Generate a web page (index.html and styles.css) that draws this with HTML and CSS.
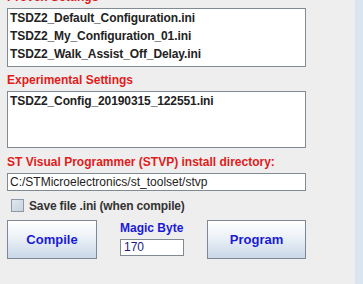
FILE: index.html
```html
<!DOCTYPE html>
<html>
<head>
<meta charset="utf-8">
<link rel="stylesheet" href="styles.css">
</head>
<body>
<div class="window">
  <div class="panel">
    <div class="label red">Proven Settings</div>
    <div class="list list1">
      <div class="row">TSDZ2_Default_Configuration.ini</div>
      <div class="row">TSDZ2_My_Configuration_01.ini</div>
      <div class="row">TSDZ2_Walk_Assist_Off_Delay.ini</div>
    </div>
    <div class="label red gap">Experimental Settings</div>
    <div class="list list2">
      <div class="row">TSDZ2_Config_20190315_122551.ini</div>
    </div>
    <div class="label red gap gap-lg">ST Visual Programmer (STVP) install directory:</div>
    <div class="field path">C:/STMicroelectronics/st_toolset/stvp</div>
    <label class="check">
      <span class="box"></span>
      <span class="check-text">Save file .ini (when compile)</span>
    </label>
    <div class="actions">
      <div class="btn">Compile</div>
      <div class="magic">
        <div class="label blue">Magic Byte</div>
        <div class="field small">170</div>
      </div>
      <div class="btn btn-wide">Program</div>
    </div>
  </div>
  <div class="strip"></div>
</div>
</body>
</html>
```

FILE: styles.css
```css
html, body {
  margin: 0;
  padding: 0;
  background: #eeeeee;
  overflow: hidden;
}
body {
  font-family: "Liberation Sans", Arial, sans-serif;
  font-size: 12px;
}
.window {
  display: flex;
  width: 363px;
  height: 284px;
}
.panel {
  width: 355px;
  margin-top: -10px;
  padding-left: 7px;
  box-sizing: border-box;
  display: flex;
  flex-direction: column;
}
.strip {
  width: 8px;
  background: #dbe5f0;
}
.label {
  height: 14px;
  line-height: 14px;
  font-weight: bold;
  margin-bottom: 4px;
  white-space: nowrap;
}
.label.gap {
  margin-top: 6px;
}
.label.gap-lg {
  margin-top: 7px;
}
.red { color: #e21b1b; }
.blue { color: #1a1ad6; }
.list {
  width: 299px;
  box-sizing: border-box;
  border: 1px solid #7f8a93;
  background: #ffffff;
  padding: 0 0 0 2px;
}
.list1 { height: 59px; }
.list2 { height: 57px; }
.row {
  height: 18px;
  line-height: 18px;
  font-weight: bold;
  color: #222222;
  letter-spacing: -0.1px;
  white-space: nowrap;
  overflow: hidden;
}
.field {
  box-sizing: border-box;
  border: 1px solid #7f8a93;
  background: #ffffff;
  color: #222222;
  white-space: nowrap;
}
.path {
  width: 299px;
  height: 18px;
  line-height: 16px;
  padding-left: 2px;
}
.check {
  display: flex;
  align-items: center;
  height: 13px;
  margin-top: 8px;
  padding-left: 4px;
}
.box {
  width: 13px;
  height: 13px;
  box-sizing: border-box;
  border: 1px solid #8b98a6;
  background: linear-gradient(135deg, #dfe6ee 0%, #c9d4e0 100%);
}
.check-text {
  margin-left: 5px;
  font-weight: bold;
  color: #333333;
  letter-spacing: -0.15px;
  white-space: nowrap;
}
.actions {
  display: flex;
  align-items: flex-start;
  gap: 23px;
  margin-top: 8px;
}
.btn {
  width: 90px;
  height: 39px;
  box-sizing: border-box;
  border: 1px solid #7c8896;
  background: linear-gradient(to bottom, #ffffff 0%, #eef3f8 40%, #c9d8e8 100%);
  color: #1a1ad6;
  font-weight: bold;
  font-size: 13px;
  display: flex;
  align-items: center;
  justify-content: center;
}
.btn-wide {
  width: 99px;
}
.magic {
  width: 64px;
  padding-top: 1px;
  display: flex;
  flex-direction: column;
}
.small {
  width: 64px;
  height: 17px;
  line-height: 15px;
  padding-left: 3px;
  color: #1a1a80;
}
```
